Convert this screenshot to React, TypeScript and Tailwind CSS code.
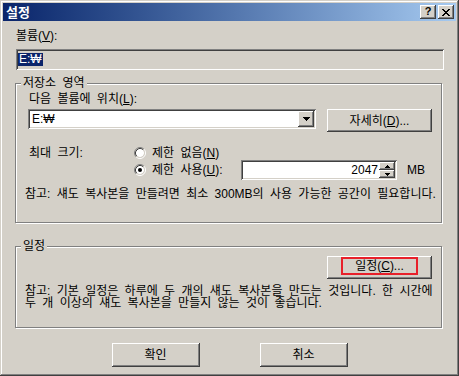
import React from "react";

const raised =
  "shadow-[inset_-1px_-1px_0_#404040,inset_1px_1px_0_#ffffff,inset_-2px_-2px_0_#808080,inset_2px_2px_0_#d4d0c8]";
const sunken =
  "shadow-[inset_1px_1px_0_#808080,inset_-1px_-1px_0_#ffffff,inset_2px_2px_0_#404040,inset_-2px_-2px_0_#d4d0c8]";

const Btn = ({ className = "", children }: { className?: string; children?: React.ReactNode }) => (
  <div className={`flex items-center justify-center bg-[#d4d0c8] ${raised} ${className}`}>{children}</div>
);

const Group = ({ label, className = "", children }: { label: string; className?: string; children?: React.ReactNode }) => (
  <div className={`relative border border-[#808080] shadow-[inset_1px_1px_0_#ffffff,1px_1px_0_#ffffff] ${className}`}>
    {/* legend sits over the top edge */}
    <span className="absolute -top-[8px] left-[5px] bg-[#d4d0c8] px-[2px] leading-[14px]">{label}</span>
    {children}
  </div>
);

const Radio = ({ checked }: { checked?: boolean }) => (
  <svg width="12" height="12" viewBox="0 0 12 12" className="shrink-0">
    <circle cx="6" cy="6" r="4" fill="#ffffff" />
    <path d="M2.11 9.89A5.5 5.5 0 0 1 9.89 2.11" stroke="#808080" fill="none" />
    <path d="M9.89 2.11A5.5 5.5 0 0 1 2.11 9.89" stroke="#ffffff" fill="none" />
    <path d="M2.82 9.18A4.5 4.5 0 0 1 9.18 2.82" stroke="#404040" fill="none" />
    <path d="M9.18 2.82A4.5 4.5 0 0 1 2.82 9.18" stroke="#d4d0c8" fill="none" />
    {checked && <circle cx="6" cy="6" r="2" fill="#000000" />}
  </svg>
);

const Arrow = ({ up }: { up?: boolean }) => (
  <svg width="7" height="4" viewBox="0 0 7 4" shapeRendering="crispEdges">
    <path d={up ? "M3 0h1v1h1v1h1v1h1v1H0V3h1V2h1V1h1z" : "M0 0h7v1H6v1H5v1H4v1H3V3H2V2H1V1H0z"} fill="#000000" />
  </svg>
);

const SmallArrow = ({ up }: { up?: boolean }) => (
  <svg width="5" height="3" viewBox="0 0 5 3" shapeRendering="crispEdges">
    <path d={up ? "M2 0h1v1h1v1h1v1H0V2h1V1h1z" : "M0 0h5v1H4v1H3v1H2V2H1V1H0z"} fill="#000000" />
  </svg>
);

export default function App() {
  return (
    <div
      className={`w-[459px] h-[376px] bg-[#d4d0c8] p-[3px] flex flex-col text-[12px] text-black [word-spacing:3px] font-['Liberation_Sans','Noto_Sans_CJK_KR',sans-serif] shadow-[inset_-1px_-1px_0_#404040,inset_1px_1px_0_#d4d0c8,inset_-2px_-2px_0_#808080,inset_2px_2px_0_#ffffff]`}
    >
      {/* Title bar */}
      <div className="h-[18px] flex items-center bg-linear-to-r from-[#0a246a] to-[#a6caf0] pl-[3px] pr-[2px]">
        <span className="text-white font-bold text-[13px] leading-none">설정</span>
        <div className="ml-auto flex gap-[2px]">
          <Btn className="w-[16px] h-[14px]">
            <span className="font-bold text-[11px] leading-none font-['Liberation_Sans',sans-serif] -mt-[1px]">?</span>
          </Btn>
          <Btn className="w-[16px] h-[14px]">
            <svg width="8" height="7" viewBox="0 0 8 7" shapeRendering="crispEdges">
              <path
                d="M0 0h2v1H0zM6 0h2v1H6zM1 1h2v1H1zM5 1h2v1H5zM2 2h4v1H2zM3 3h2v1H3zM2 4h4v1H2zM1 5h2v1H1zM5 5h2v1H5zM0 6h2v1H0zM6 6h2v1H6z"
                fill="#000000"
              />
            </svg>
          </Btn>
        </div>
      </div>

      {/* Body */}
      <div className="flex flex-col pl-[12px]">
        <div className="mt-[8px] ml-[1px] leading-[14px]">
          볼륨(<span className="underline">V</span>):
        </div>
        <div className={`mt-[6px] ml-[1px] w-[428px] h-[21px] p-[2px] flex items-center ${sunken}`}>
          <span className="bg-[#0a246a] text-white leading-[13px] px-[1px]">E:₩</span>
        </div>

        <Group label="저장소 영역" className="mt-[13px] w-[427px] h-[140px] pl-[12px] pt-[9px]">
          <div className="ml-[1px] leading-[13px]">
            다음 볼륨에 위치(<span className="underline">L</span>):
          </div>
          <div className="mt-[3px] flex items-start">
            <div className={`w-[288px] h-[20px] p-[2px] bg-white flex ${sunken}`}>
              <span className="flex-1 pl-[2px] leading-[16px]">E:₩</span>
              <Btn className="w-[16px] h-[16px]">
                <Arrow />
              </Btn>
            </div>
            <Btn className="ml-[11px] w-[105px] h-[23px]">
              자세히(<span className="underline">D</span>)...
            </Btn>
          </div>
          <div className="mt-[14px] flex">
            <div className="ml-[1px] w-[105px] leading-[14px]">최대 크기:</div>
            <div className="flex flex-col">
              <div className="h-[14px] flex items-center gap-[6px]">
                <Radio />
                <span>
                  제한 없음(<span className="underline">N</span>)
                </span>
              </div>
              <div className="h-[20px] flex items-center">
                <Radio checked />
                <span className="ml-[6px] w-[89px]">
                  제한 사용(<span className="underline">U</span>):
                </span>
                <div className={`w-[156px] h-[20px] p-[2px] bg-white flex ${sunken}`}>
                  <span className="flex-1 text-right pr-[1px] leading-[16px]">2047</span>
                  <div className="w-[16px] flex flex-col">
                    <Btn className="h-[8px]">
                      <SmallArrow up />
                    </Btn>
                    <Btn className="h-[8px]">
                      <SmallArrow />
                    </Btn>
                  </div>
                </div>
                <span className="ml-[10px]">MB</span>
              </div>
            </div>
          </div>
          <div className="mt-[8px] -ml-[3px] whitespace-nowrap leading-[13px]">
            참고: 섀도 복사본을 만들려면 최소 300MB의 사용 가능한 공간이 필요합니다.
          </div>
        </Group>

        <Group label="일정" className="mt-[23px] w-[427px] h-[82px] pt-[9px] pl-[9px] pr-[9px]">
          <div className="flex justify-end">
            <Btn className="w-[105px] h-[23px] !items-start pt-[1px]">
              <span className="w-[77px] h-[18px] border-2 border-[#e8202a] flex items-center justify-center">
                일정(<span className="underline">C</span>)...
              </span>
            </Btn>
          </div>
          <div className="mt-[6px] whitespace-nowrap">
            <div className="h-[12px] leading-[12px]">참고: 기본 일정은 하루에 두 개의 섀도 복사본을 만드는 것입니다. 한 시간에</div>
            <div className="h-[12px] leading-[12px]">두 개 이상의 섀도 복사본을 만들지 않는 것이 좋습니다.</div>
          </div>
        </Group>
      </div>

      <div className="mt-[15px] flex justify-center gap-[60px]">
        <Btn className="w-[88px] h-[24px]">확인</Btn>
        <Btn className="w-[88px] h-[24px]">취소</Btn>
      </div>
    </div>
  );
}
